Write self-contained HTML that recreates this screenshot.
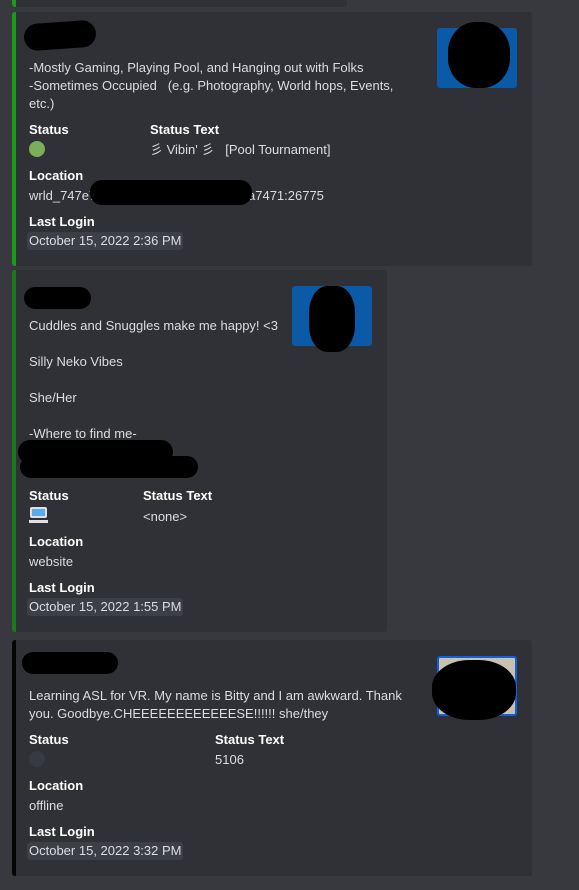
<!DOCTYPE html>
<html><head><meta charset="utf-8"><style>
*{margin:0;padding:0;box-sizing:border-box}
body{width:579px;height:890px;background:#37393f;position:relative;overflow:hidden;font-family:"Liberation Sans",sans-serif;font-size:13px;color:#dcddde}
.e{position:absolute;background:#2f3136;border-radius:3px}
.t{position:absolute;white-space:nowrap;line-height:18px;margin-top:1px}
.b{font-weight:bold;color:#fff}
.d{position:absolute;background:#3c3f45;border-radius:3px;height:18px;line-height:18px;padding:0 2px;white-space:nowrap}
.k{position:absolute;background:#000;border-radius:50%}
</style></head><body>
<div class="e" style="left:12px;top:-5px;width:335px;height:12px;border-left:4px solid #1a9a1a"></div>

<div class="e" style="left:12px;top:12px;width:520px;height:254px;border-left:4px solid #1a9a1a"></div>
<div class="k" style="left:24px;top:22px;width:72px;height:27px;border-radius:14px;transform:rotate(-4deg)"></div>
<div style="position:absolute;left:437px;top:28px;width:80px;height:60px;background:#0b5aa8;border-radius:3px"></div>
<div class="k" style="left:448px;top:22px;width:62px;height:66px;border-radius:45%"></div>
<div class="t" style="left:29px;top:58px">-Mostly Gaming, Playing Pool, and Hanging out with Folks</div>
<div class="t" style="left:29px;top:76px">-Sometimes Occupied &nbsp; (e.g. Photography, World hops, Events,</div>
<div class="t" style="left:29px;top:94px">etc.)</div>
<div class="t b" style="left:29px;top:120px">Status</div>
<div class="t b" style="left:150px;top:120px">Status Text</div>
<div style="position:absolute;left:29px;top:141px;width:16px;height:16px;border-radius:50%;background:#7aae5a"></div>
<div class="t" style="left:150px;top:140px">彡 Vibin' 彡 &nbsp; [Pool Tournament]</div>
<div class="t b" style="left:29px;top:166px">Location</div>
<div class="t" style="left:29px;top:186px">wrld_747e7.</div>
<div class="t" style="left:248px;top:186px">a7471:26775</div>
<div class="k" style="left:90px;top:180px;width:162px;height:25px;border-radius:12px"></div>
<div class="t b" style="left:29px;top:212px">Last Login</div>
<div class="d" style="left:27px;top:232px">October 15, 2022 2:36 PM</div>

<div class="e" style="left:12px;top:270px;width:375px;height:362px;border-left:4px solid #1a7a1a"></div>
<div class="k" style="left:24px;top:287px;width:67px;height:22px;border-radius:11px"></div>
<div style="position:absolute;left:292px;top:286px;width:80px;height:60px;background:#0b5aa8;border-radius:3px"></div>
<div class="k" style="left:309px;top:286px;width:46px;height:66px;border-radius:40%"></div>
<div class="t" style="left:29px;top:316px">Cuddles and Snuggles make me happy! &lt;3</div>
<div class="t" style="left:29px;top:352px">Silly Neko Vibes</div>
<div class="t" style="left:29px;top:388px">She/Her</div>
<div class="t" style="left:29px;top:424px">-Where to find me-</div>
<div class="k" style="left:18px;top:440px;width:155px;height:24px;border-radius:12px"></div>
<div class="k" style="left:20px;top:456px;width:178px;height:22px;border-radius:11px"></div>
<div class="t b" style="left:29px;top:486px">Status</div>
<div class="t b" style="left:143px;top:486px">Status Text</div>
<div style="position:absolute;left:30px;top:507px;width:17px;height:11px;background:#5aabee;border:2px solid #e0e0e0;border-radius:2px"></div>
<div style="position:absolute;left:29px;top:520px;width:19px;height:3px;background:#e0e0e0"></div>
<div class="t" style="left:143px;top:507px">&lt;none&gt;</div>
<div class="t b" style="left:29px;top:532px">Location</div>
<div class="t" style="left:29px;top:552px">website</div>
<div class="t b" style="left:29px;top:578px">Last Login</div>
<div class="d" style="left:27px;top:598px">October 15, 2022 1:55 PM</div>

<div class="e" style="left:12px;top:640px;width:520px;height:236px;border-left:4px solid #050505"></div>
<div class="k" style="left:22px;top:652px;width:96px;height:22px;border-radius:11px"></div>
<div style="position:absolute;left:437px;top:656px;width:80px;height:60px;background:#c8c0b0;border-radius:3px;border:2px solid #1060e0"></div>
<div class="k" style="left:432px;top:660px;width:84px;height:60px;border-radius:45%"></div>
<div class="t" style="left:29px;top:686px">Learning ASL for VR. My name is Bitty and I am awkward. Thank</div>
<div class="t" style="left:29px;top:704px">you. Goodbye.CHEEEEEEEEEEEESE!!!!!! she/they</div>
<div class="t b" style="left:29px;top:730px">Status</div>
<div class="t b" style="left:215px;top:730px">Status Text</div>
<div style="position:absolute;left:29px;top:751px;width:16px;height:16px;border-radius:50%;background:#373a40"></div>
<div class="t" style="left:215px;top:750px">5106</div>
<div class="t b" style="left:29px;top:776px">Location</div>
<div class="t" style="left:29px;top:796px">offline</div>
<div class="t b" style="left:29px;top:822px">Last Login</div>
<div class="d" style="left:27px;top:842px">October 15, 2022 3:32 PM</div>
</body></html>
